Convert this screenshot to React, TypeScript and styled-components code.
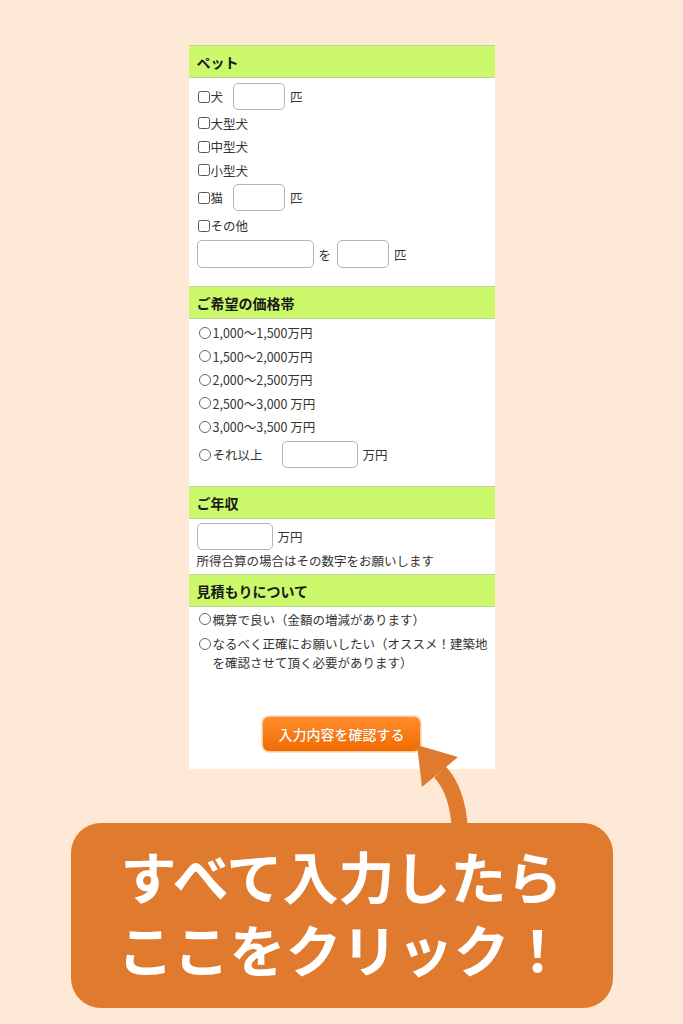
import React from 'react'
import styled, { createGlobalStyle } from 'styled-components'

const GlobalStyle = createGlobalStyle`
  html, body {
    margin: 0;
    padding: 0;
  }
  body {
    background: #fde9d5;
    font-family: 'Noto Sans CJK JP', 'Noto Sans', sans-serif;
    color: #333;
  }
`

const ORANGE = '#e07a2e'

export default function App() {
  return (
    <>
      <GlobalStyle />
      <Page>
        <Panel>
          <SectionHeader>ペット</SectionHeader>
          <SectionBody $pb={18}>
            <Row $h={27} $mt={5}>
              <Check />犬<Field $w={52} $ml={10} />
              <Unit>匹</Unit>
            </Row>
            <Row $mt={1.5}>
              <Check />大型犬
            </Row>
            <Row>
              <Check />中型犬
            </Row>
            <Row>
              <Check />小型犬
            </Row>
            <Row $h={27} $mt={2}>
              <Check />猫<Field $w={52} $ml={10} />
              <Unit>匹</Unit>
            </Row>
            <Row $mt={3}>
              <Check />その他
            </Row>
            <Row $h={28} $mt={2.5}>
              <Field $w={117} />
              <Unit>を</Unit>
              <Field $w={52} $ml={6} />
              <Unit>匹</Unit>
            </Row>
          </SectionBody>

          <SectionHeader>ご希望の価格帯</SectionHeader>
          <SectionBody $pb={18}>
            <Row $mt={2}>
              <Radio />1,000〜1,500万円
            </Row>
            <Row>
              <Radio />1,500〜2,000万円
            </Row>
            <Row>
              <Radio />2,000〜2,500万円
            </Row>
            <Row>
              <Radio />2,500〜3,000 万円
            </Row>
            <Row>
              <Radio />3,000〜3,500 万円
            </Row>
            <Row $h={27} $mt={2.5}>
              <Radio />それ以上<Field $w={76} $ml={19} />
              <Unit>万円</Unit>
            </Row>
          </SectionBody>

          <SectionHeader>ご年収</SectionHeader>
          <SectionBody $pb={3}>
            <Row $h={27} $mt={4}>
              <Field $w={76} />
              <Unit>万円</Unit>
            </Row>
            <Row $h={21}>所得合算の場合はその数字をお願いします</Row>
          </SectionBody>

          <SectionHeader>見積もりについて</SectionHeader>
          <SectionBody $pb={0}>
            <Row $mt={0.5}>
              <Radio />概算で良い（金額の増減があります）
            </Row>
            <WrapRow>
              <Radio />
              <span>
                なるべく正確にお願いしたい（オススメ！建築地
                <br />
                を確認させて頂く必要があります）
              </span>
            </WrapRow>
          </SectionBody>

          <SubmitArea>
            <SubmitButton type="button">入力内容を確認する</SubmitButton>
          </SubmitArea>
        </Panel>

        <Callout>
          すべて入力したら
          <br />
          ここをクリック！
        </Callout>

        <Arrow width="90" height="100" viewBox="0 0 90 100">
          <path d="M60 96 Q58 56 40 37" fill="none" stroke={ORANGE} strokeWidth="16" />
          <polygon points="17,10 58,22 22,52" fill={ORANGE} />
        </Arrow>
      </Page>
    </>
  )
}

const Page = styled.div`
  position: relative;
  width: 683px;
  height: 1024px;
  padding-top: 45px;
  box-sizing: border-box;
  display: flex;
  flex-direction: column;
  align-items: center;
  overflow: hidden;
`
const Panel = styled.div`
  width: 306px;
  background: #fff;
  display: flex;
  flex-direction: column;
`
const SectionHeader = styled.div`
  height: 31px;
  display: flex;
  align-items: center;
  padding: 0 8px;
  background: #ccf86c;
  border-top: 1px solid #bcd49a;
  border-bottom: 1px solid #bcd49a;
  font-size: 14px;
  font-weight: 700;
  color: #1a1a1a;
`
const SectionBody = styled.div<{ $pb: number }>`
  display: flex;
  flex-direction: column;
  padding: 0 8px ${(p) => p.$pb}px;
`
const Row = styled.div<{ $h?: number; $mt?: number }>`
  display: flex;
  align-items: center;
  height: ${(p) => p.$h ?? 23.5}px;
  margin-top: ${(p) => p.$mt ?? 0}px;
  font-size: 12.5px;
  white-space: nowrap;
`
const WrapRow = styled.div`
  display: flex;
  align-items: flex-start;
  margin-top: 2.5px;
  font-size: 12.5px;
  line-height: 19px;
  white-space: nowrap;
`
const Check = styled.span`
  width: 10px;
  height: 10px;
  border: 1px solid #555;
  border-radius: 2.5px;
  margin: 0 1px 0 1px;
  flex-shrink: 0;
`
const Radio = styled.span`
  width: 10px;
  height: 10px;
  border: 1px solid #666;
  border-radius: 50%;
  margin: 0 2px 0 2px;
  flex-shrink: 0;
  ${WrapRow} & {
    margin-top: 4px;
  }
`
const Field = styled.input<{ $w: number; $ml?: number }>`
  width: ${(p) => p.$w}px;
  height: 100%;
  box-sizing: border-box;
  margin: 0 0 0 ${(p) => p.$ml ?? 0}px;
  padding: 0 4px;
  border: 1px solid #b4b4b4;
  border-radius: 5px;
  background: #fff;
  outline: none;
`
const Unit = styled.span`
  margin-left: 5px;
`
const SubmitArea = styled.div`
  display: flex;
  justify-content: center;
  padding: 44.5px 0 17px;
`
const SubmitButton = styled.button`
  width: 159px;
  height: 36px;
  border: 1px solid #f7c9a0;
  border-radius: 7px;
  background: linear-gradient(#ff8d2c, #f26a00);
  box-shadow: 0 0 0 1px #fbe3cc;
  color: #fff;
  font-family: 'Noto Sans CJK JP', sans-serif;
  font-size: 14px;
  font-weight: 500;
  text-shadow: 0 0 1px rgba(150, 60, 0, 0.4);
  cursor: pointer;
`
const Callout = styled.div`
  width: 542px;
  height: 185px;
  margin-top: 54px;
  box-sizing: border-box;
  padding-top: 15px;
  border-radius: 30px;
  background: ${ORANGE};
  color: #fff;
  text-align: center;
  font-size: 56px;
  font-weight: 700;
  line-height: 73px;
`
const Arrow = styled.svg`
  position: absolute;
  left: 400px;
  top: 735px;
`
